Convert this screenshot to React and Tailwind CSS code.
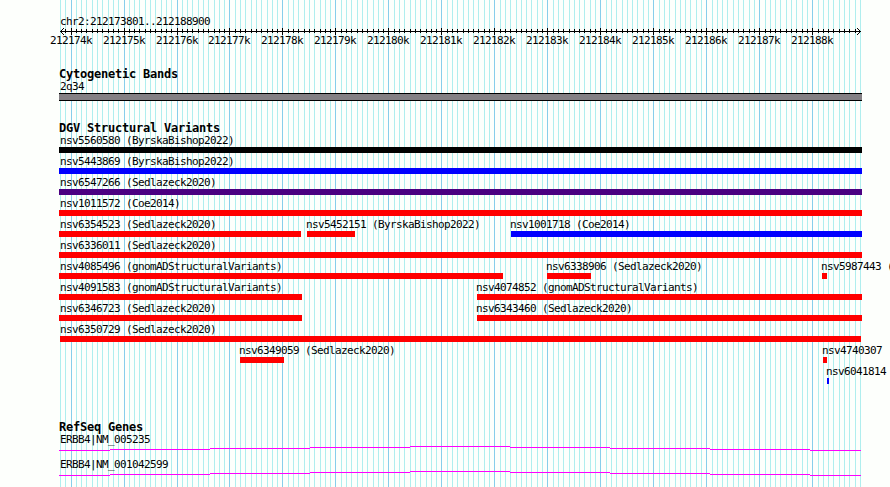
import clsx from 'clsx';

const START = 212173801;
const LEFT = 60;
const SCALE = 800 / 15100;

const toX = (bp) => Math.round(LEFT + (bp - START) * SCALE);

const ticks = Array.from({ length: 152 }, (_, i) => {
  const bp = 212173800 + i * 100;
  return { bp, x: toX(bp), major: bp % 1000 === 0 };
});
const majors = ticks.filter((t) => t.major);

// start / end are pixels on the panel
const variantRows = [
  [{ name: 'nsv5560580 (ByrskaBishop2022)', start: 59, end: 862, color: 'bg-black' }],
  [{ name: 'nsv5443869 (ByrskaBishop2022)', start: 59, end: 862, color: 'bg-[#0000ff]' }],
  [{ name: 'nsv6547266 (Sedlazeck2020)', start: 59, end: 862, color: 'bg-[#4b0082]' }],
  [{ name: 'nsv1011572 (Coe2014)', start: 59, end: 862, color: 'bg-[#ff0000]' }],
  [
    { name: 'nsv6354523 (Sedlazeck2020)', start: 59, end: 301, color: 'bg-[#ff0000]' },
    { name: 'nsv5452151 (ByrskaBishop2022)', start: 307, end: 355, color: 'bg-[#ff0000]' },
    { name: 'nsv1001718 (Coe2014)', start: 511, end: 862, color: 'bg-[#0000ff]' },
  ],
  [{ name: 'nsv6336011 (Sedlazeck2020)', start: 59, end: 862, color: 'bg-[#ff0000]' }],
  [
    { name: 'nsv4085496 (gnomADStructuralVariants)', start: 59, end: 503, color: 'bg-[#ff0000]' },
    { name: 'nsv6338906 (Sedlazeck2020)', start: 547, end: 591, color: 'bg-[#ff0000]' },
    { name: 'nsv5987443 (', start: 822, end: 827, color: 'bg-[#ff0000]' },
  ],
  [
    { name: 'nsv4091583 (gnomADStructuralVariants)', start: 59, end: 302, color: 'bg-[#ff0000]' },
    { name: 'nsv4074852 (gnomADStructuralVariants)', start: 477, end: 862, color: 'bg-[#ff0000]' },
  ],
  [
    { name: 'nsv6346723 (Sedlazeck2020)', start: 59, end: 302, color: 'bg-[#ff0000]' },
    { name: 'nsv6343460 (Sedlazeck2020)', start: 477, end: 862, color: 'bg-[#ff0000]' },
  ],
  [{ name: 'nsv6350729 (Sedlazeck2020)', start: 60, end: 861, color: 'bg-[#ff0000]' }],
  [
    { name: 'nsv6349059 (Sedlazeck2020)', start: 240, end: 284, color: 'bg-[#ff0000]' },
    { name: 'nsv4740307', start: 823, end: 827, color: 'bg-[#ff0000]' },
  ],
  [{ name: 'nsv6041814', start: 827, end: 829, color: 'bg-[#0000ff]' }],
];

const genes = ['ERBB4|NM_005235', 'ERBB4|NM_001042599'];

const Gridlines = () => (
  <svg className="absolute inset-0" width="890" height="487" shapeRendering="crispEdges">
    {ticks.map((t) => (
      <rect key={t.bp} x={t.x} y="0" width="1" height="487" fill={t.major ? '#87ceeb' : '#afeeee'} />
    ))}
  </svg>
);

const Ruler = () => (
  <svg className="-mt-px block" width="890" height="9" shapeRendering="crispEdges">
    <rect x="60" y="4" width="801" height="1" />
    {ticks.slice(1, -1).map((t) => (
      <rect key={t.bp} x={t.x} y={t.major ? 1 : 2} width="1" height={t.major ? 7 : 4} />
    ))}
    {[1, 2, 3].map((d) => (
      <g key={d}>
        <rect x={60 + d} y={4 - d} width="1" height="1" />
        <rect x={60 + d} y={4 + d} width="1" height="1" />
        <rect x={860 - d} y={4 - d} width="1" height="1" />
        <rect x={860 - d} y={4 + d} width="1" height="1" />
      </g>
    ))}
  </svg>
);

const Heading = ({ children }) => (
  <h2 className="ml-[59px] h-3 text-[12px] leading-[10px] font-bold tracking-[-0.224px]">{children}</h2>
);

const Label = ({ children, className }) => (
  <div className={clsx('h-3 text-[11px] leading-3 tracking-[-0.622px]', className)}>{children}</div>
);

const VariantRow = ({ items }) => (
  <div className="flex h-[21px]">
    {items.map((v, i) => {
      const prev = i ? items[i - 1].end : 0;
      return (
        <div key={v.name} className="shrink-0 pt-[3px]" style={{ marginLeft: v.start - prev, width: v.end - v.start }}>
          <Label className={clsx(v.start === 59 && 'ml-px', v.start > 60 && '-ml-px')}>{v.name}</Label>
          <div className={clsx('h-1.5', v.color)} />
        </div>
      );
    })}
  </div>
);

const Gene = ({ name }) => (
  <div className="h-[25px]">
    <Label className="ml-[60px]">{name}</Label>
    <svg className="block" width="890" height="7" shapeRendering="crispEdges" fill="#ff00ff">
      <rect x="59" y="4" width="51" height="1" />
      <rect x="110" y="3" width="100" height="1" />
      <rect x="210" y="2" width="100" height="1" />
      <rect x="310" y="1" width="100" height="1" />
      <rect x="410" y="0" width="100" height="1" />
      <rect x="510" y="1" width="100" height="1" />
      <rect x="610" y="2" width="100" height="1" />
      <rect x="710" y="3" width="100" height="1" />
      <rect x="810" y="4" width="51" height="1" />
    </svg>
  </div>
);

export default function App() {
  return (
    <main className="relative h-[487px] w-[890px] overflow-hidden bg-[#fdfffc] font-['DejaVu_Sans_Mono',monospace] whitespace-nowrap text-black">
      <Gridlines />
      <div className="relative flex flex-col">
        <section className="pt-4">
          <Label className="ml-[60px]">chr2:212173801..212188900</Label>
          <Ruler />
          <div className="-mt-px ml-[50px] flex">
            {majors.map((t, i) => (
              <div key={t.bp} className="shrink-0" style={{ width: i < majors.length - 1 ? majors[i + 1].x - t.x : 60 }}>
                <Label>{t.bp / 1000}k</Label>
              </div>
            ))}
          </div>
        </section>
        <section className="pt-[22px]">
          <Heading>Cytogenetic Bands</Heading>
          <Label className="ml-[60px]">2q34</Label>
          <div className="ml-[59px] h-2 w-[803px] border-y border-black bg-[#848084]" />
        </section>
        <section className="pt-[22px]">
          <Heading>DGV Structural Variants</Heading>
          <div className="-mt-[3px]">
            {variantRows.map((items) => (
              <VariantRow key={items[0].name} items={items} />
            ))}
          </div>
        </section>
        <section className="pt-[38px]">
          <Heading>RefSeq Genes</Heading>
          {genes.map((name) => (
            <Gene key={name} name={name} />
          ))}
        </section>
      </div>
    </main>
  );
}
